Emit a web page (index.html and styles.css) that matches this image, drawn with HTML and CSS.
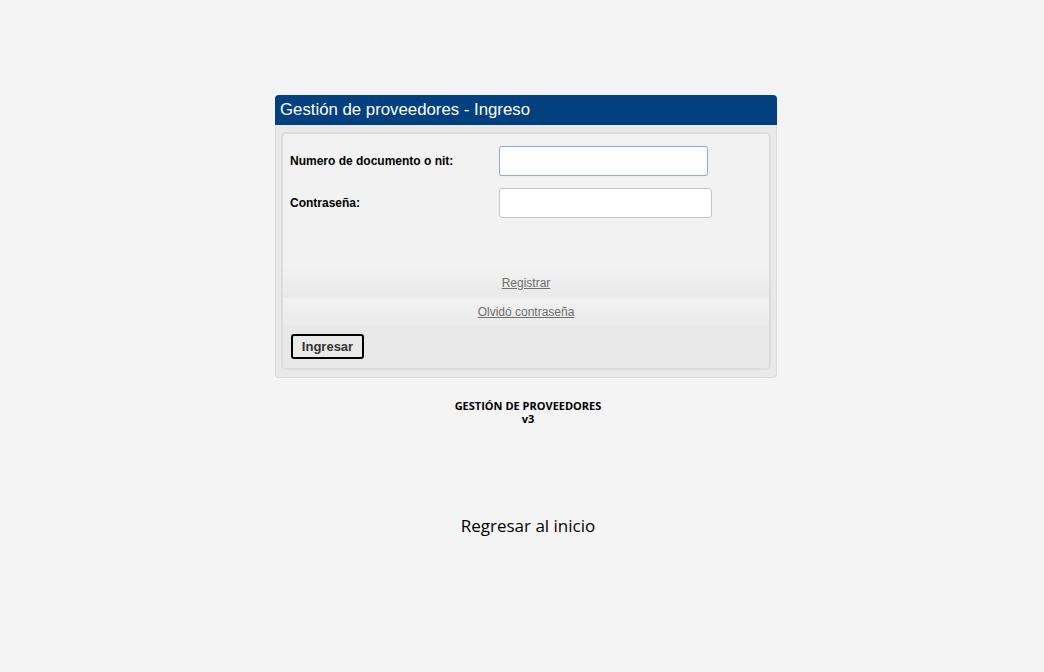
FILE: index.html
```html
<!DOCTYPE html>
<html lang="es">
<head>
    <meta charset="UTF-8">
    <title>Gestión de proveedores - Ingreso</title>
    <link rel="stylesheet" href="styles.css">
</head>
<body>
    <div class="wrapper">
        <div class="panel">
            <div class="panel-title">Gestión de proveedores - Ingreso</div>
            <form class="panel-body">
                <div class="field">
                    <label for="nit">Numero de documento o nit:</label>
                    <input type="text" id="nit" class="input focused">
                </div>
                <div class="field">
                    <label for="clave">Contraseña:</label>
                    <input type="password" id="clave" class="input">
                </div>

                <div class="link-row first"><a href="#">Registrar</a></div>
                <div class="link-row"><a href="#">Olvidó contraseña</a></div>

                <div class="actions">
                    <button type="button" class="btn">Ingresar</button>
                </div>
            </form>
        </div>

        <div class="app-name">
            GESTIÓN DE PROVEEDORES<br>v3
        </div>

        <a class="back" href="#">Regresar al inicio</a>
    </div>
</body>
</html>
```

FILE: styles.css
```css
body {
    margin: 0;
    background: #f4f4f4;
    font-family: "Liberation Sans", Arial, sans-serif;
    color: #000;
}

.wrapper {
    width: 502px;
    margin-left: calc(50% - 247px);
    padding-top: 95px;
}

.panel {
    background: #e9e9e9;
    border: 1px solid #d9d9d9;
    border-top: none;
    border-radius: 4px;
    padding-bottom: 7px;
}

.panel-title {
    background: #02407f;
    color: #fff;
    font-size: 16.8px;
    line-height: 30px;
    height: 30px;
    padding-left: 5px;
    border-radius: 4px 4px 0 0;
    margin: 0 -1px;
}

.panel-body {
    margin: 7px 5px 0;
    background: #f2f2f2;
    border: 2px solid #dcdcdc;
    border-radius: 5px;
    padding-top: 12px;
    overflow: hidden;
}

.field {
    display: flex;
    align-items: center;
    padding-left: 7px;
    margin-bottom: 12px;
}

.field label {
    width: 209px;
    font-size: 12px;
    font-weight: bold;
}

.input {
    box-sizing: border-box;
    width: 213px;
    height: 30px;
    border: 1px solid #c6c6c6;
    border-radius: 3px;
    background: #fff;
    margin: 0;
    padding: 0 4px;
}

.input.focused {
    width: 209px;
    border-color: #7fb2ea;
    box-shadow: 0 0 1px #a6cbf3;
}

.link-row {
    text-align: center;
    font-size: 12px;
    height: 28px;
    line-height: 28px;
    background: linear-gradient(#f1f1f1, #ebebeb);
}

.link-row.first {
    margin-top: 48px;
    height: 32px;
    line-height: 34px;
    background: linear-gradient(#f2f2f2, #e9e9e9);
}

.link-row a {
    color: #6f6f6f;
}

.actions {
    background: #e8e8e8;
    padding: 8px 0 9px 8px;
}

.btn {
    font-family: "Liberation Sans", Arial, sans-serif;
    font-size: 13px;
    font-weight: bold;
    color: #333;
    background: #e9e9e9;
    border: 2px solid #000;
    border-radius: 3px;
    width: 73px;
    height: 25px;
    padding: 0;
    margin: 0;
}

.app-name {
    text-align: center;
    font-family: "Open Sans", sans-serif;
    font-size: 11px;
    font-weight: bold;
    line-height: 13px;
    margin-top: 21px;
    padding-left: 4px;
}

.back {
    display: block;
    text-align: center;
    font-family: "Open Sans", sans-serif;
    font-size: 17px;
    color: #000;
    text-decoration: none;
    margin-top: 89px;
    padding-left: 4px;
}
```
